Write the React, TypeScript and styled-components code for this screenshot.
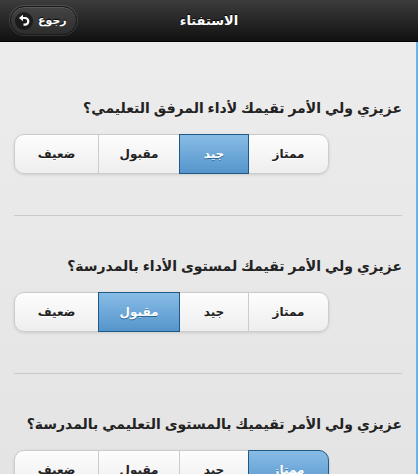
import React from "react";
import styled, { createGlobalStyle } from "styled-components";

const GlobalStyle = createGlobalStyle`
  html, body {
    margin: 0;
    padding: 0;
    overflow: hidden;
  }
  body {
    font-family: "Liberation Sans", "DejaVu Sans", sans-serif;
  }
`;

const Page = styled.div`
  width: 418px;
  height: 474px;
  overflow: hidden;
  display: flex;
  flex-direction: column;
  background: linear-gradient(#ededed, #e4e4e4);
`;

const Header = styled.header`
  height: 41px;
  flex: none;
  border-bottom: 1px solid #000;
  background: linear-gradient(#3c3c3c, #111111);
  display: grid;
  grid-template-columns: 1fr auto 1fr;
  align-items: center;
  direction: ltr;
`;

const Title = styled.h1`
  margin: 0;
  font-size: 13px;
  font-weight: bold;
  color: #fff;
  text-shadow: 0 -1px 1px #000;
`;

const BackButton = styled.button`
  justify-self: start;
  margin-left: 10px;
  height: 29px;
  padding: 0 9px 0 4px;
  display: flex;
  align-items: center;
  gap: 5px;
  border-radius: 15px;
  border: 1px solid #1a1a1a;
  background: linear-gradient(#444444, #2d2d2d);
  box-shadow: 0 0 0 1px rgba(255, 255, 255, 0.12),
    inset 0 1px 0 rgba(255, 255, 255, 0.12);
  color: #fff;
  font-family: inherit;
  font-size: 11px;
  font-weight: bold;
  text-shadow: 0 -1px 1px #000;
  cursor: pointer;
`;

const BackIcon = () => (
  <svg width="18" height="18" viewBox="0 0 18 18" aria-hidden="true">
    <circle cx="9" cy="9" r="9" fill="rgba(0,0,0,0.5)" />
    <path
      d="M7.5 6 H10 A3.3 3.3 0 0 1 10 12.6 H8.5"
      fill="none"
      stroke="#fff"
      strokeWidth="2.2"
    />
    <path d="M4 6 L8 2.8 L8 9.2 Z" fill="#fff" />
  </svg>
);

const Content = styled.main`
  flex: 1;
  direction: rtl;
  padding: 16px 14px 0;
  border-right: 2px solid #6ab4ee;
  display: flex;
  flex-direction: column;
`;

const Question = styled.section<{ $last?: boolean }>`
  padding: 40px 0 41px;
  border-bottom: ${(p) => (p.$last ? "none" : "1px solid #c9c9c9")};
  display: flex;
  flex-direction: column;
  align-items: flex-start;
  gap: 16px;
`;

const Label = styled.p`
  margin: 0;
  font-size: 14px;
  font-weight: bold;
  line-height: 20px;
  color: #222;
`;

const Group = styled.div`
  align-self: flex-end;
  display: flex;
  direction: rtl;
  border-radius: 10px;
  box-shadow: 0 1px 3px rgba(0, 0, 0, 0.12);
`;

const Segment = styled.button<{ $active?: boolean; $width: number }>`
  position: relative;
  width: ${(p) => p.$width}px;
  height: 40px;
  padding: 0;
  margin: 0;
  font-family: inherit;
  font-size: 12px;
  font-weight: bold;
  cursor: pointer;
  border: 1px solid ${(p) => (p.$active ? "#1f5a87" : "#cccccc")};
  z-index: ${(p) => (p.$active ? 1 : 0)};
  color: ${(p) => (p.$active ? "#fff" : "#222")};
  text-shadow: ${(p) =>
    p.$active ? "0 1px 0 #2a6491" : "0 1px 0 #ffffff"};
  background: ${(p) =>
    p.$active
      ? "linear-gradient(#88bce6, #5595cb)"
      : "linear-gradient(#fdfdfd, #eeeeee)"};

  & + & {
    margin-right: -1px;
  }
  &:first-child {
    border-radius: 0 10px 10px 0;
  }
  &:last-child {
    border-radius: 10px 0 0 10px;
  }
`;

const OPTIONS = [
  { label: "ممتاز", width: 81 },
  { label: "جيد", width: 70 },
  { label: "مقبول", width: 82 },
  { label: "ضعيف", width: 85 },
];

const QUESTIONS = [
  { text: "عزيزي ولي الأمر تقيمك لأداء المرفق التعليمي؟", selected: 1 },
  { text: "عزيزي ولي الأمر تقيمك لمستوى الأداء بالمدرسة؟", selected: 2 },
  { text: "عزيزي ولي الأمر تقيميك بالمستوى التعليمي بالمدرسة؟", selected: 0 },
];

export default function App() {
  return (
    <>
      <GlobalStyle />
      <Page>
        <Header>
          <BackButton>
            <BackIcon />
            رجوع
          </BackButton>
          <Title>الاستفتاء</Title>
          <span />
        </Header>
        <Content>
          {QUESTIONS.map((q, i) => (
            <Question key={i} $last={i === QUESTIONS.length - 1}>
              <Label>{q.text}</Label>
              <Group>
                {OPTIONS.map((o, j) => (
                  <Segment
                    key={o.label}
                    $width={o.width}
                    $active={j === q.selected}
                  >
                    {o.label}
                  </Segment>
                ))}
              </Group>
            </Question>
          ))}
        </Content>
      </Page>
    </>
  );
}
